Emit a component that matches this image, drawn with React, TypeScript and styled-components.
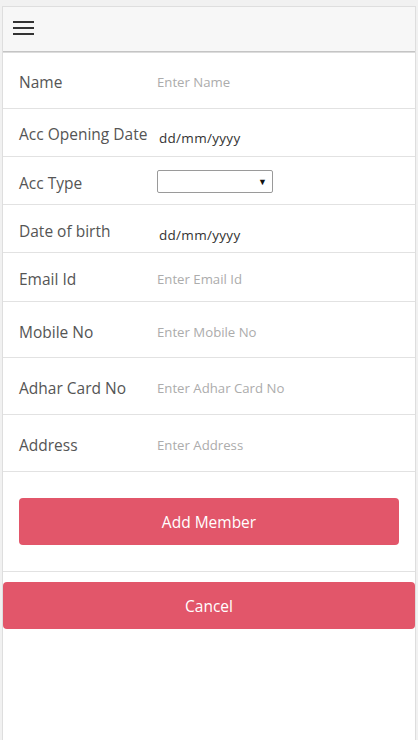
import React from "react";
import styled, { createGlobalStyle } from "styled-components";

const Global = createGlobalStyle`
  html, body { margin: 0; padding: 0; background: #f1f1f1; }
  body { font-family: "Open Sans", "Noto Sans", sans-serif; }
  * { box-sizing: border-box; }
`;

const Page = styled.div`
  padding: 6px 2px 0 2px;
  height: 740px;
`;

const Frame = styled.div`
  height: 734px;
  background: #fff;
  border: 1px solid #dedede;
  border-bottom: none;
  display: flex;
  flex-direction: column;
`;

const Header = styled.header`
  height: 45px;
  flex: none;
  background: #f7f7f7;
  border-bottom: 1px solid #c4c4c4;
  box-shadow: 0 1px 0 #dcdcdc;
  display: flex;
  align-items: center;
  padding-left: 10px;
  padding-bottom: 2px;
`;

const MenuButton = styled.button`
  border: none;
  background: transparent;
  padding: 0;
  width: 21px;
  height: 14px;
  display: flex;
  flex-direction: column;
  justify-content: space-between;
  cursor: pointer;
`;

const MenuLine = styled.span`
  display: block;
  width: 21px;
  height: 2px;
  background: #333;
`;

const Row = styled.div<{ $h: number }>`
  height: ${(p) => p.$h}px;
  flex: none;
  border-bottom: 1px solid #e2e2e2;
  display: grid;
  grid-template-columns: 138px 1fr;
  align-items: center;
  padding-left: 16px;
  padding-top: 4px;
`;

const Label = styled.label<{ $shift?: number }>`
  font-size: 15.5px;
  color: #555;
  white-space: nowrap;
  transform: translateY(${(p) => p.$shift ?? 0}px);
`;

const TextInput = styled.input`
  border: none;
  outline: none;
  background: transparent;
  font-family: inherit;
  font-size: 13.2px;
  color: #333;
  padding: 0;
  width: 220px;
  &::placeholder { color: #acacac; }
`;

const DateText = styled.span<{ $shift?: number }>`
  font-size: 13.5px;
  color: #333;
  padding-left: 2px;
  letter-spacing: 0.3px;
  transform: translateY(${(p) => p.$shift ?? 0}px);
`;

const SelectBox = styled.div`
  width: 116px;
  height: 23px;
  border: 1px solid #9a9a9a;
  border-radius: 2px;
  display: flex;
  align-items: center;
  justify-content: flex-end;
  padding-right: 5px;
  font-size: 9px;
  color: #111;
  background: #fff;
  transform: translateY(-1px);
`;

const ButtonArea = styled.div`
  height: 100px;
  flex: none;
  border-bottom: 1px solid #e2e2e2;
  display: flex;
  align-items: center;
  padding: 0 16px;
`;

const PrimaryButton = styled.button`
  width: 100%;
  height: 47px;
  border: none;
  border-radius: 4px;
  background: #e2566a;
  color: #fff;
  font-family: inherit;
  font-size: 15.5px;
  cursor: pointer;
`;

const CancelWrap = styled.div`
  padding: 10px 0 0 0;
`;

const fields: { label: string; h: number; placeholder: string }[] = [
  { label: "Email Id", h: 49, placeholder: "Enter Email Id" },
  { label: "Mobile No", h: 56, placeholder: "Enter Mobile No" },
  { label: "Adhar Card No", h: 57, placeholder: "Enter Adhar Card No" },
  { label: "Address", h: 57, placeholder: "Enter Address" },
];

export default function App() {
  return (
    <>
      <Global />
      <Page>
        <Frame>
          <Header>
            <MenuButton aria-label="menu">
              <MenuLine />
              <MenuLine />
              <MenuLine />
            </MenuButton>
          </Header>
          <Row $h={57}>
            <Label>Name</Label>
            <TextInput placeholder="Enter Name" />
          </Row>
          <Row $h={48}>
            <Label $shift={-1}>Acc Opening Date</Label>
            <DateText $shift={3}>dd/mm/yyyy</DateText>
          </Row>
          <Row $h={48}>
            <Label>Acc Type</Label>
            <SelectBox>▼</SelectBox>
          </Row>
          <Row $h={48}>
            <Label>Date of birth</Label>
            <DateText $shift={4}>dd/mm/yyyy</DateText>
          </Row>
          {fields.map((f) => (
            <Row key={f.label} $h={f.h}>
              <Label>{f.label}</Label>
              <TextInput placeholder={f.placeholder} />
            </Row>
          ))}
          <ButtonArea>
            <PrimaryButton>Add Member</PrimaryButton>
          </ButtonArea>
          <CancelWrap>
            <PrimaryButton>Cancel</PrimaryButton>
          </CancelWrap>
        </Frame>
      </Page>
    </>
  );
}
